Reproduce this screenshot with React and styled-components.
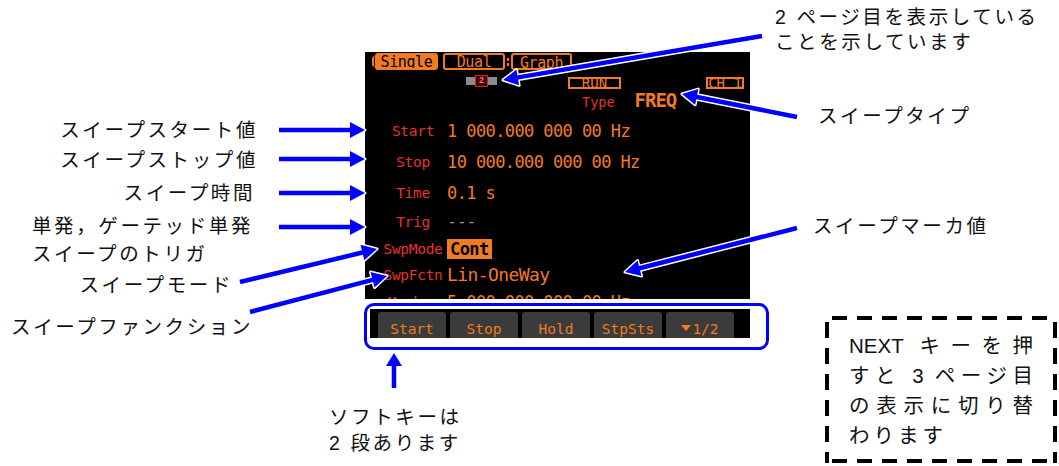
import React from "react";
import styled, { createGlobalStyle } from "styled-components";

const ORANGE = "#f27a22";
const RED = "#e8322c";
const BLUE = "#0000ff";
const JP = `"Liberation Sans", "Noto Sans CJK JP", sans-serif`;
const LCD = `"DejaVu Sans Mono", "Liberation Mono", monospace`;

const Global = createGlobalStyle`
  html, body { margin: 0; padding: 0; background: #fff; }
  body { font-family: ${JP}; }
`;

const Canvas = styled.div`
  position: relative;
  width: 1059px;
  height: 466px;
  overflow: hidden;
  background: #fff;
  display: grid;
  grid-template-columns: 364px 405px 1fr;
  color: #111;
`;

/* ---------- left annotations ---------- */
const LeftCol = styled.div`
  display: flex;
  flex-direction: column;
  align-items: flex-end;
  padding-top: 115px;
  padding-right: 106px;
`;

const Callout = styled.div`
  font-size: 19.5px;
  line-height: ${(p) => p.$lh || 30}px;
  letter-spacing: 2.6px;
  white-space: nowrap;
  margin-top: ${(p) => p.$mt || 0}px;
  margin-right: ${(p) => p.$mr || 0}px;
  margin-left: ${(p) => p.$ml || 0}px;
  text-align: left;
`;

/* ---------- center ---------- */
const CenterCol = styled.div`
  display: flex;
  flex-direction: column;
  align-items: flex-start;
`;

const Screen = styled.div`
  margin-top: 52px;
  margin-left: 1px;
  width: 385px;
  height: 247px;
  background: #000;
  overflow: hidden;
  display: flex;
  flex-direction: column;
  font-family: ${LCD};
`;

const TabRow = styled.div`
  display: flex;
  align-items: center;
  height: 17px;
  margin-top: 1px;
  padding-left: 7px;
`;

const TabEdge = styled.div`
  width: 3px;
  height: 11px;
  border-left: 2px solid ${ORANGE};
  border-radius: 4px 0 0 4px;
  box-sizing: border-box;
`;

const Tab = styled.div`
  box-sizing: border-box;
  width: ${(p) => p.$w}px;
  height: 17px;
  margin-left: ${(p) => p.$ml}px;
  border: 2px solid ${ORANGE};
  border-radius: 3px;
  background: ${(p) => (p.$active ? ORANGE : "#000")};
  color: ${(p) => (p.$active ? "#000" : ORANGE)};
  font-size: 15px;
  letter-spacing: -0.4px;
  line-height: 14px;
  text-align: center;
  overflow: hidden;
  padding-top: ${(p) => (p.$low ? 1 : 0)}px;
`;

const TabJoin = styled.div`
  width: 2px;
  height: 8px;
  margin-left: 2px;
  background: repeating-linear-gradient(to bottom, ${ORANGE} 0 3px, transparent 3px 5px);
`;

const StatusRow = styled.div`
  display: flex;
  align-items: flex-start;
  height: 14px;
  margin-top: 5px;
`;

const PageInd = styled.div`
  display: flex;
  align-items: center;
  margin-left: 101px;
  height: 12px;
`;

const GrayBlock = styled.div`
  width: 9px;
  height: 8px;
  background: #8c8c8c;
`;

const PageBox = styled.div`
  box-sizing: border-box;
  width: 13px;
  height: 12px;
  border: 1.5px solid #e02020;
  background: #3a0606;
  color: #ff7070;
  font-size: 9px;
  line-height: 9px;
  text-align: center;
  font-family: "Liberation Sans", sans-serif;
  font-weight: bold;
`;

const StatusBox = styled.div`
  box-sizing: border-box;
  width: ${(p) => p.$w}px;
  height: 12px;
  margin-left: ${(p) => p.$ml}px;
  margin-top: 2px;
  border: 2px solid ${ORANGE};
  color: ${ORANGE};
  font-size: 14px;
  line-height: 8px;
  text-align: center;
  white-space: pre;
`;

const TypeRow = styled.div`
  display: flex;
  align-items: center;
  height: 20px;
  margin-top: 1px;
  padding-left: 217px;
`;

const SmallLabel = styled.span`
  color: ${RED};
  font-size: 13.5px;
  margin-top: 3px;
`;

const BigValue = styled.span`
  color: ${ORANGE};
  font-size: 19px;
  letter-spacing: -1px;
  font-weight: bold;
  margin-left: 20px;
`;

const ParamRow = styled.div`
  display: flex;
  align-items: center;
  flex-shrink: 0;
  height: ${(p) => p.$h}px;
  margin-top: ${(p) => p.$mt || 0}px;
`;

const ParamLabel = styled.div`
  width: 68px;
  margin-left: 14px;
  text-align: center;
  color: ${RED};
  font-size: 14.5px;
  letter-spacing: -0.3px;
  white-space: nowrap;
`;

const ParamValue = styled.div`
  color: ${(p) => (p.$hl ? "#000" : p.$muted ? "#8a8a8a" : ORANGE)};
  background: ${(p) => (p.$hl ? ORANGE : "transparent")};
  font-size: ${(p) => p.$size || 17}px;
  letter-spacing: -0.6px;
  font-weight: ${(p) => (p.$hl ? "bold" : "normal")};
  line-height: 20px;
  padding: ${(p) => (p.$hl ? "0 3px" : "0")};
  white-space: pre;
  margin-top: ${(p) => (p.$muted ? -3 : 0)}px;
`;

const SoftFrame = styled.div`
  box-sizing: border-box;
  margin-top: 4px;
  width: 405px;
  height: 47px;
  border: 3px solid ${BLUE};
  border-radius: 10px;
  padding: 3px 0 0 3px;
  background: #fff;
`;

const KeyStrip = styled.div`
  box-sizing: border-box;
  width: 380px;
  height: 29px;
  background: #000;
  display: flex;
  gap: 4px;
  padding: 3px 0 0 8px;
  overflow: hidden;
`;

const SoftKey = styled.div`
  box-sizing: border-box;
  width: 68px;
  height: 32px;
  flex-shrink: 0;
  background: #3b3b3b;
  border-radius: 3px 3px 0 0;
  color: ${ORANGE};
  font-family: ${LCD};
  font-size: 14.5px;
  line-height: 16px;
  padding-top: 9px;
  display: flex;
  justify-content: center;
  align-items: flex-start;
`;

const DownTri = styled.span`
  display: inline-block;
  width: 0;
  height: 0;
  margin-top: 4px;
  margin-right: 1px;
  border-left: 5px solid transparent;
  border-right: 5px solid transparent;
  border-top: 6px solid ${ORANGE};
`;

const SoftNote = styled.div`
  margin-top: 54px;
  margin-left: -35px;
  font-size: 19.5px;
  line-height: 26px;
  letter-spacing: 2.6px;
  white-space: nowrap;
`;

/* ---------- right annotations ---------- */
const RightCol = styled.div`
  display: flex;
  flex-direction: column;
  align-items: flex-start;
`;

const NextBox = styled.div`
  box-sizing: border-box;
  margin-top: ${(p) => p.$mt}px;
  margin-left: ${(p) => p.$ml}px;
  width: 232px;
  height: 147px;
  padding: 15px 0 0 24px;
  background:
    linear-gradient(to right, #000 15px, transparent 15px) 7px 0 / 25px 4px repeat-x,
    linear-gradient(to right, #000 15px, transparent 15px) 7px 100% / 25px 4px repeat-x,
    linear-gradient(to bottom, #000 16px, transparent 16px) 0 6px / 4px 26px repeat-y,
    linear-gradient(to bottom, #000 16px, transparent 16px) 100% 6px / 4px 26px repeat-y;
`;

const NextLine = styled.div`
  width: 184px;
  font-size: 20.5px;
  line-height: 30px;
  white-space: nowrap;
  text-align: ${(p) => (p.$last ? "left" : "justify")};
  text-align-last: ${(p) => (p.$last ? "left" : "justify")};
  letter-spacing: ${(p) => (p.$last ? 4 : 0)}px;
`;

/* ---------- arrows ---------- */
const ArrowLayer = styled.svg`
  position: absolute;
  left: 0;
  top: 0;
  width: 1059px;
  height: 466px;
  pointer-events: none;
`;

function Arrow({ x1, y1, x2, y2, L = 15, W = 8, sw = 4.5 }) {
  const dx = x2 - x1;
  const dy = y2 - y1;
  const len = Math.hypot(dx, dy);
  const ux = dx / len;
  const uy = dy / len;
  const bx = x2 - ux * L;
  const by = y2 - uy * L;
  const nx = -uy;
  const ny = ux;
  const pts = `${x2},${y2} ${bx + nx * W},${by + ny * W} ${bx - nx * W},${by - ny * W}`;
  return (
    <g>
      <line x1={x1} y1={y1} x2={bx + ux} y2={by + uy} stroke="#fff" strokeWidth={sw + 3} />
      <polygon points={pts} fill="#fff" stroke="#fff" strokeWidth="3" strokeLinejoin="round" />
      <line x1={x1} y1={y1} x2={bx + ux} y2={by + uy} stroke={BLUE} strokeWidth={sw} />
      <polygon points={pts} fill={BLUE} />
    </g>
  );
}

const arrows = [
  { x1: 279, y1: 130, x2: 365, y2: 130 },
  { x1: 279, y1: 159, x2: 365, y2: 159 },
  { x1: 279, y1: 193, x2: 365, y2: 193 },
  { x1: 279, y1: 227, x2: 365, y2: 227 },
  { x1: 240, y1: 282, x2: 377, y2: 249 },
  { x1: 250, y1: 312, x2: 387, y2: 276 },
  { x1: 394, y1: 388, x2: 394, y2: 353, L: 13 },
  { x1: 762, y1: 36, x2: 503, y2: 80 },
  { x1: 797, y1: 117, x2: 682, y2: 94 },
  { x1: 797, y1: 228, x2: 625, y2: 272 },
];

const params = [
  { label: "Start", value: "1 000.000 000 00 Hz", h: 31, mt: 5.5 },
  { label: "Stop", value: "10 000.000 000 00 Hz", h: 31 },
  { label: "Time", value: "0.1 s", h: 30 },
  { label: "Trig", value: "---", h: 29, muted: true },
  { label: "SwpMode", value: "Cont", h: 25, hl: true },
  { label: "SwpFctn", value: "Lin-OneWay", h: 26, size: 18 },
  { label: "Marker", value: "5 000.000 000 00 Hz", h: 28 },
];

const keys = ["Start", "Stop", "Hold", "StpSts"];

export default function App() {
  return (
    <>
      <Global />
      <Canvas>
        <LeftCol>
          <Callout>スイープスタート値</Callout>
          <Callout>スイープストップ値</Callout>
          <Callout $mt={3} $mr={3}>スイープ時間</Callout>
          <Callout $mt={4} $mr={5} $lh={28}>
            単発，ゲーテッド単発
            <br />
            スイープのトリガ
          </Callout>
          <Callout $mt={2} $mr={25}>スイープモード</Callout>
          <Callout $mt={12} $mr={5}>スイープファンクション</Callout>
        </LeftCol>

        <CenterCol>
          <Screen>
            <TabRow>
              <TabEdge />
              <Tab $w={63} $ml={0} $active>Single</Tab>
              <Tab $w={62} $ml={5}>Dual</Tab>
              <TabJoin />
              <Tab $w={61} $ml={2} $low>Graph</Tab>
            </TabRow>
            <StatusRow>
              <PageInd>
                <GrayBlock />
                <PageBox>2</PageBox>
                <GrayBlock />
              </PageInd>
              <StatusBox $w={53} $ml={71}>RUN</StatusBox>
              <StatusBox $w={38} $ml={85}>CH 1</StatusBox>
            </StatusRow>
            <TypeRow>
              <SmallLabel>Type</SmallLabel>
              <BigValue>FREQ</BigValue>
            </TypeRow>
            {params.map((p) => (
              <ParamRow key={p.label} $h={p.h} $mt={p.mt}>
                <ParamLabel>{p.label}</ParamLabel>
                <ParamValue $hl={p.hl} $muted={p.muted} $size={p.size}>
                  {p.value}
                </ParamValue>
              </ParamRow>
            ))}
          </Screen>
          <SoftFrame>
            <KeyStrip>
              {keys.map((k) => (
                <SoftKey key={k}>{k}</SoftKey>
              ))}
              <SoftKey>
                <DownTri />
                1/2
              </SoftKey>
            </KeyStrip>
          </SoftFrame>
          <SoftNote>
            ソフトキーは
            <br />2 段あります
          </SoftNote>
        </CenterCol>

        <RightCol>
          <Callout $mt={5} $ml={6} $lh={25}>
            2 ページ目を表示している
            <br />
            ことを示しています
          </Callout>
          <Callout $mt={49} $ml={49} $lh={25}>スイープタイプ</Callout>
          <Callout $mt={85} $ml={44} $lh={25}>スイープマーカ値</Callout>
          <NextBox $mt={77} $ml={56}>
            <NextLine>NEXT キーを押</NextLine>
            <NextLine>すと 3 ページ目</NextLine>
            <NextLine>の表示に切り替</NextLine>
            <NextLine $last>わります</NextLine>
          </NextBox>
        </RightCol>

        <ArrowLayer viewBox="0 0 1059 466">
          {arrows.map((a, i) => (
            <Arrow key={i} {...a} />
          ))}
        </ArrowLayer>
      </Canvas>
    </>
  );
}
